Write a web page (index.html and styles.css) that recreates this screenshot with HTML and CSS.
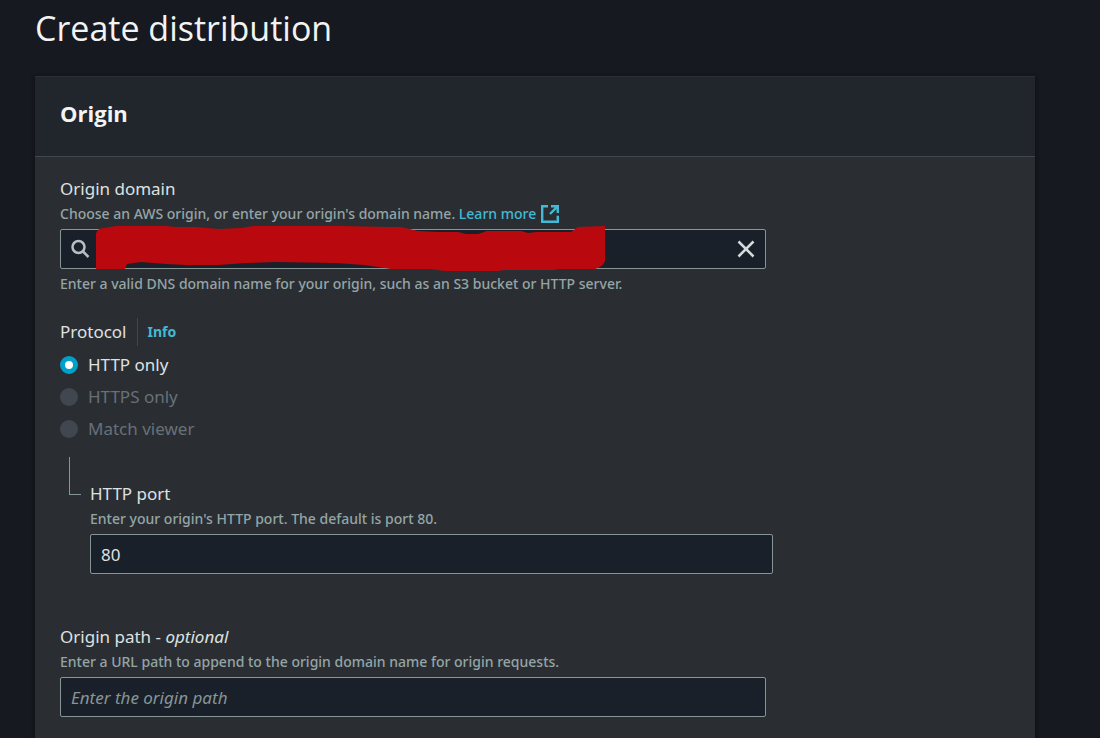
FILE: index.html
```html
<!DOCTYPE html>
<html lang="en">
<head>
<meta charset="utf-8">
<meta name="viewport" content="width=device-width, initial-scale=1">
<title>Create distribution</title>
<link rel="stylesheet" href="styles.css">
</head>
<body>
<main class="page">
  <h1 class="page-title">Create distribution</h1>
  <section class="panel" aria-labelledby="origin-heading">
    <header class="panel-header">
      <h2 class="panel-title" id="origin-heading">Origin</h2>
    </header>
    <form class="panel-body">
      <div class="field">
        <label class="label" for="origin-domain">Origin domain</label>
        <p class="hint">Choose an AWS origin, or enter your origin's domain name.
          <a class="link" href="#">Learn more<svg class="external" viewBox="0 0 18 18" aria-hidden="true"><path d="M7 1.200H1.200v15.600h15.600v-6M10 1.200h6.800v6.800M16.800 1.200L9 9"/></svg></a></p>
        <div class="control search">
          <svg class="search-icon" viewBox="0 0 20 20" aria-hidden="true"><circle cx="7.500" cy="8" r="6"/><path d="M12 12.500L17.500 18"/></svg>
          <input class="search-input" id="origin-domain" type="text">
          <button class="clear" type="button" aria-label="Clear"><svg viewBox="0 0 18 18" aria-hidden="true"><path d="M1.500 1.500l15 15M16.500 1.500l-15 15"/></svg></button>
          <svg class="redaction" viewBox="0 0 510 46" aria-hidden="true"><path d="M0 43V8Q1 2 8 2L20 0H70L80 1L100 1L122 3L145 2L157 0H245L290 1H305L322 5L342 6H362L370 8H382L391 5L425 5L432 7L440 6H475L482 1L509 0V35Q507 41 499 43H462L458 44H408L402 45H348L335 43H295L268 39L240 37L180 36L150 37L122 39H90L70 38L45 36L31 38L29 43Z"/></svg>
        </div>
        <p class="hint constraint">Enter a valid DNS domain name for your origin, such as an S3 bucket or HTTP server.</p>
      </div>
      <fieldset class="protocol">
        <legend class="legend"><span class="label">Protocol</span><a class="info" href="#">Info</a></legend>
        <div class="options">
          <label class="option"><input class="radio" type="radio" name="protocol" checked>HTTP only</label>
          <label class="option option-disabled"><input class="radio" type="radio" name="protocol" disabled>HTTPS only</label>
          <label class="option option-disabled"><input class="radio" type="radio" name="protocol" disabled>Match viewer</label>
        </div>
      </fieldset>
      <div class="nested">
        <div class="connector"></div>
        <div class="field nested-field">
          <label class="label" for="http-port">HTTP port</label>
          <p class="hint">Enter your origin's HTTP port. The default is port 80.</p>
          <input class="control text-input" id="http-port" type="text" value="80">
        </div>
      </div>
      <div class="field">
        <label class="label" for="origin-path">Origin path - <i>optional</i></label>
        <p class="hint">Enter a URL path to append to the origin domain name for origin requests.</p>
        <input class="control text-input" id="origin-path" type="text" placeholder="Enter the origin path">
      </div>
    </form>
  </section>
</main>
</body>
</html>
```
FILE: styles.css
```css
* { box-sizing: border-box; }

body {
  margin: 0;
  background: #16191f;
  color: #dfe1e1;
  font-family: "Noto Sans", "Open Sans", sans-serif;
  font-size: 17px;
  line-height: 24px;
}

h1, h2, p { margin: 0; }

.page { padding: 10px 65px 0 35px; }

.page-title {
  margin-bottom: 30px;
  color: #f2f3f3;
  font-family: "Open Sans", "Noto Sans", sans-serif;
  font-size: 34px;
  font-weight: 400;
  line-height: 36px;
}

.panel {
  background: #2a2e33;
  box-shadow: 0 1px 3px 1px #0e1116;
}

.panel-header {
  padding: 19px 25px 25px;
  border-top: 1px solid #2c3036;
  border-bottom: 1px solid #414750;
  background: #21252c;
}

.panel-title {
  color: #f2f3f3;
  font-family: "Open Sans", "Noto Sans", sans-serif;
  font-size: 22px;
  font-weight: 700;
  line-height: 35px;
}

.panel-body { padding: 20px 25px 40px; }

.field {
  display: flex;
  flex-direction: column;
  align-items: flex-start;
}

.label { font-size: 17px; line-height: 24px; }

.hint {
  margin: 2px 0 4px;
  color: #95a5a6;
  font-size: 14px;
  font-weight: 500;
  line-height: 22px;
}

.constraint { margin-top: 4px; }

.link {
  display: inline-flex;
  align-items: center;
  gap: 5px;
  color: #44b9d6;
  text-decoration: none;
}

.external {
  width: 18px;
  height: 18px;
  fill: none;
  stroke: currentColor;
  stroke-width: 2.4;
}

.control {
  width: calc(75% - 7px);
  height: 40px;
  border: 1px solid #879596;
  border-radius: 2px;
  background: #1a2029;
}

.search {
  display: flex;
  position: relative;
  align-items: center;
  padding: 0 10px;
}

.search-icon {
  width: 20px;
  height: 20px;
  fill: none;
  stroke: #b8bfc2;
  stroke-width: 2.5;
}

.search-input {
  flex: 1;
  min-width: 0;
  border: 0;
  outline: 0;
  background: transparent;
  color: inherit;
  font: inherit;
}

.clear {
  display: flex;
  padding: 0;
  border: 0;
  background: none;
}

.clear svg {
  width: 18px;
  height: 18px;
  fill: none;
  stroke: #d5dbdb;
  stroke-width: 2.5;
}

.redaction {
  position: absolute;
  top: -4px;
  left: 35px;
  width: 510px;
  height: 46px;
  fill: #b9090e;
}

.text-input {
  padding: 0 10px;
  color: inherit;
  font: inherit;
}

.text-input::placeholder {
  color: #879596;
  font-style: italic;
  opacity: 1;
}

.protocol {
  min-width: 0;
  margin: 19px 0 0;
  padding: 0;
  border: 0;
}

.legend {
  display: flex;
  align-items: center;
  padding: 0;
}

.info {
  margin-left: 10px;
  padding-left: 10px;
  border-left: 1px solid #414750;
  color: #44b9d6;
  font-size: 14px;
  font-weight: 700;
  line-height: 28px;
  text-decoration: none;
}

.options {
  display: flex;
  flex-direction: column;
  align-items: flex-start;
  gap: 8px;
  padding-top: 7px;
}

.option {
  display: flex;
  align-items: center;
  gap: 10px;
}

.option-disabled { color: #687078; }

.radio {
  width: 18px;
  height: 18px;
  margin: 0;
  border-radius: 50%;
  background: #414750;
  appearance: none;
}

.radio:checked {
  border: 5px solid #00a1c9;
  background: #ffffff;
}

.nested {
  display: flex;
  margin: 16px 0 51px;
}

.connector {
  width: 12px;
  height: 38px;
  margin: 0 9px;
  border-bottom: 1px solid #879596;
  border-left: 1px solid #879596;
}

.nested-field {
  flex: 1;
  padding-top: 25px;
}
```
